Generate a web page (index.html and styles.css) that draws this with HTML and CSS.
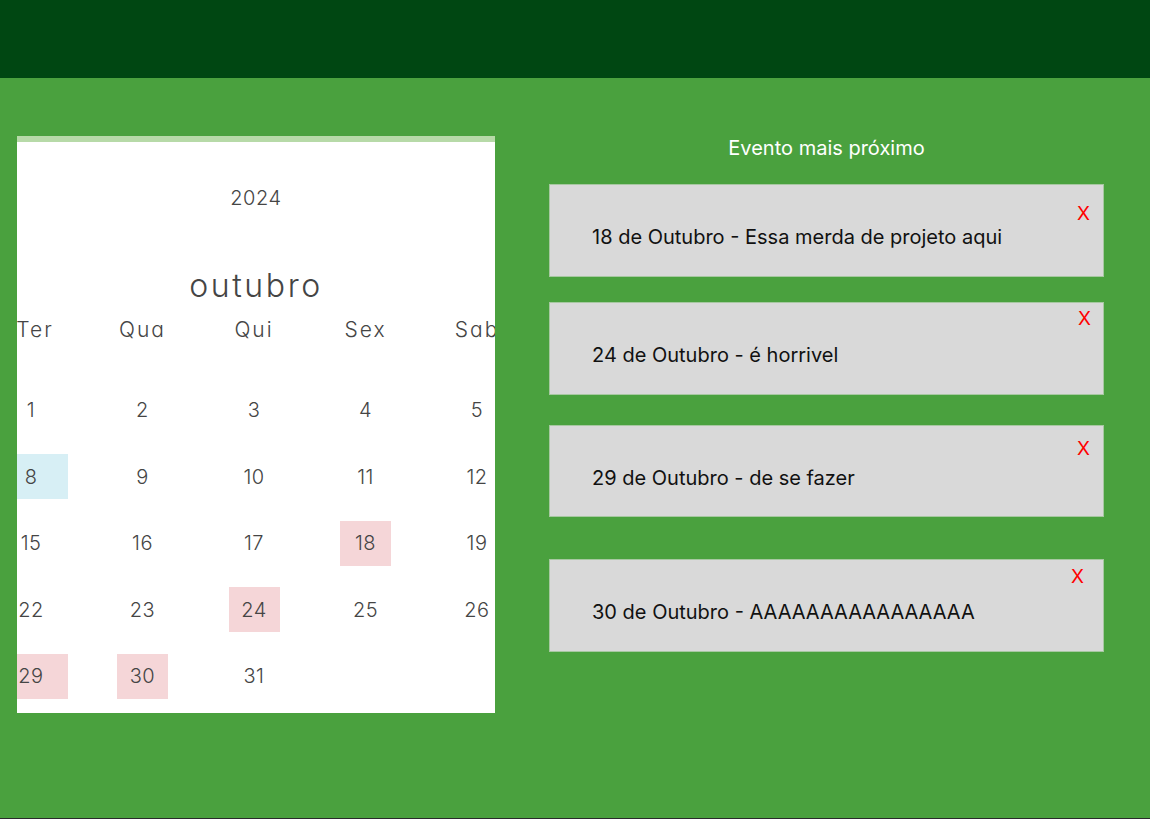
FILE: index.html
```html
<!DOCTYPE html>
<html lang="pt-BR">
<head>
<meta charset="utf-8">
<title>Calendário</title>
<link rel="stylesheet" href="styles.css">
</head>
<body>
<div class="page">
  <header class="topbar"></header>
  <main class="main">
    <section class="calendar">
      <div class="year">2024</div>
      <div class="month">outubro</div>
      <div class="grid weekdays">
        <div class="wd wd-first">Ter</div>
        <div class="wd">Qua</div>
        <div class="wd">Qui</div>
        <div class="wd">Sex</div>
        <div class="wd">Sab</div>
      </div>
      <div class="grid days">
        <div class="cell"><span class="day first">1</span></div>
        <div class="cell"><span class="day">2</span></div>
        <div class="cell"><span class="day">3</span></div>
        <div class="cell"><span class="day">4</span></div>
        <div class="cell"><span class="day">5</span></div>

        <div class="cell"><span class="day first today">8</span></div>
        <div class="cell"><span class="day">9</span></div>
        <div class="cell"><span class="day">10</span></div>
        <div class="cell"><span class="day">11</span></div>
        <div class="cell"><span class="day">12</span></div>

        <div class="cell"><span class="day first">15</span></div>
        <div class="cell"><span class="day">16</span></div>
        <div class="cell"><span class="day">17</span></div>
        <div class="cell"><span class="day marked">18</span></div>
        <div class="cell"><span class="day">19</span></div>

        <div class="cell"><span class="day first">22</span></div>
        <div class="cell"><span class="day">23</span></div>
        <div class="cell"><span class="day marked">24</span></div>
        <div class="cell"><span class="day">25</span></div>
        <div class="cell"><span class="day">26</span></div>

        <div class="cell"><span class="day first marked">29</span></div>
        <div class="cell"><span class="day marked">30</span></div>
        <div class="cell"><span class="day">31</span></div>
      </div>
    </section>

    <section class="events">
      <h2 class="events-title">Evento mais próximo</h2>
      <div class="event ev1">
        <p class="event-text">18 de Outubro - Essa merda de projeto aqui</p>
        <button class="close">X</button>
      </div>
      <div class="event ev2">
        <p class="event-text">24 de Outubro - é horrivel</p>
        <button class="close">X</button>
      </div>
      <div class="event ev3">
        <p class="event-text">29 de Outubro - de se fazer</p>
        <button class="close">X</button>
      </div>
      <div class="event ev4">
        <p class="event-text">30 de Outubro - AAAAAAAAAAAAAAAA</p>
        <button class="close">X</button>
      </div>
    </section>
  </main>
</div>
</body>
</html>
```

FILE: styles.css
```css
* { box-sizing: border-box; }

html, body {
  margin: 0;
  padding: 0;
}

body {
  background: #4aa13e;
  font-family: Inter, "Noto Sans", "Liberation Sans", sans-serif;
}

.page {
  height: 819px;
  border-bottom: 1px solid #2b2b2b;
  background: #4aa13e;
  overflow: hidden;
}

.topbar {
  height: 78px;
  background: #004712;
}

.main {
  display: flex;
  align-items: flex-start;
  gap: 54px;
  padding: 58px 0 0 17px;
}

/* Calendar */
.calendar {
  width: 478px;
  height: 577px;
  background: #ffffff;
  border-top: 6px solid #b7daa8;
  overflow: hidden;
  color: #454545;
  font-family: Inter, "Noto Sans", sans-serif;
  font-weight: 300;
  font-feature-settings: "cv11" 1;
  padding-top: 44px;
}

.year {
  text-align: center;
  font-size: 20px;
  line-height: 24px;
  letter-spacing: 0.6px;
}

.month {
  text-align: center;
  font-size: 32px;
  line-height: 40px;
  margin-top: 56px;
  letter-spacing: 2.6px;
}

.grid {
  display: grid;
  grid-template-columns: repeat(5, 111.5px);
  margin-left: -41.75px;
  width: 557.5px;
}

.weekdays {
  margin-top: 12px;
}

.wd {
  text-align: center;
  font-size: 21px;
  line-height: 24px;
  letter-spacing: 2px;
}

.wd-first {
  padding-left: 8px;
}

.days {
  margin-top: 35px;
  grid-auto-rows: 66.5px;
}

.cell {
  display: flex;
  justify-content: center;
  align-items: center;
}

.day {
  display: flex;
  align-items: center;
  justify-content: center;
  width: 51px;
  height: 45px;
  font-size: 20px;
  line-height: 24px;
  letter-spacing: 0.5px;
}

.day.first {
  margin-left: 23px;
  padding-right: 23px;
}

.day.today { background: #d7eff5; }
.day.marked { background: #f5d6d8; }

/* Events */
.events {
  width: 555px;
  display: flex;
  flex-direction: column;
  margin-top: 1px;
}

.events-title {
  margin: 0;
  text-align: center;
  color: #ffffff;
  font-weight: 400;
  font-size: 20px;
  line-height: 22px;
}

.event {
  position: relative;
  height: 93px;
  background: #d9d9d9;
  border: 1px solid #a7c8a1;
  padding: 40px 0 0 42px;
}

.event-text {
  margin: 0;
  font-size: 20px;
  line-height: 24px;
  color: #111111;
}

.close {
  position: absolute;
  background: none;
  border: 0;
  padding: 0;
  color: #ff0000;
  font-family: Inter, "Noto Sans", sans-serif;
  font-size: 19px;
  line-height: 22px;
  cursor: pointer;
}

.ev1 { margin-top: 25px; }
.ev1 .close { top: 18px; right: 13px; }

.ev2 { margin-top: 25px; }
.ev2 .close { top: 5px; right: 12px; }

.ev3 { margin-top: 30px; height: 92px; }
.ev3 .close { top: 12px; right: 13px; }

.ev4 { margin-top: 42px; }
.ev4 .close { top: 6px; right: 19px; }
```
